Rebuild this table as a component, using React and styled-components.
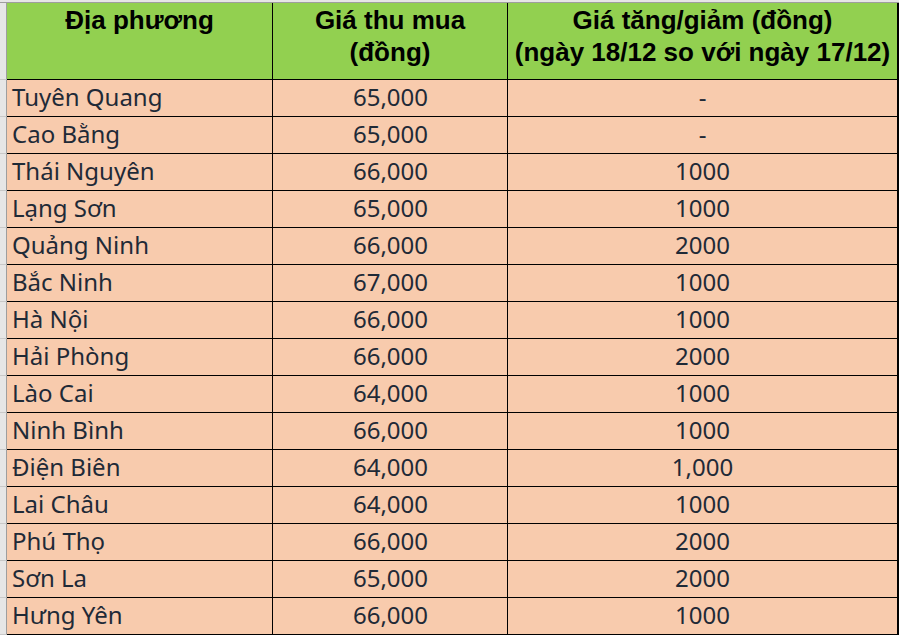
import styled, { createGlobalStyle } from 'styled-components';

const GlobalStyle = createGlobalStyle`
  html, body {
    margin: 0;
    padding: 0;
    background: #ffffff;
  }
  * {
    box-sizing: border-box;
  }
`;

const rows = [
  ['Tuyên Quang', '65,000', '-'],
  ['Cao Bằng', '65,000', '-'],
  ['Thái Nguyên', '66,000', '1000'],
  ['Lạng Sơn', '65,000', '1000'],
  ['Quảng Ninh', '66,000', '2000'],
  ['Bắc Ninh', '67,000', '1000'],
  ['Hà Nội', '66,000', '1000'],
  ['Hải Phòng', '66,000', '2000'],
  ['Lào Cai', '64,000', '1000'],
  ['Ninh Bình', '66,000', '1000'],
  ['Điện Biên', '64,000', '1,000'],
  ['Lai Châu', '64,000', '1000'],
  ['Phú Thọ', '66,000', '2000'],
  ['Sơn La', '65,000', '2000'],
  ['Hưng Yên', '66,000', '1000'],
];

const Sheet = styled.div({
  display: 'grid',
  gridTemplateColumns: '7px 266px 235px 391px',
  gridTemplateRows: `3px 77px repeat(${rows.length}, 37px)`,
  width: 900,
  height: 640,
  background: '#ffffff',
});

const Gutter = styled.div({
  background: '#e6e6e6',
  borderRight: '1px solid #9e9e9e',
  borderBottom: '1px solid #c8c8c8',
});

const TopGutter = styled.div({
  background: '#e6e6e6',
  borderBottom: '1px solid #9e9e9e',
});

const HeadCell = styled.div(({ $last }) => ({
  background: '#92d050',
  borderRight: `${$last ? 2 : 1}px solid #000`,
  borderBottom: '1px solid #000',
  fontFamily: '"Liberation Sans", Arial, sans-serif',
  fontWeight: 700,
  fontSize: 26,
  lineHeight: '32px',
  color: '#000',
  textAlign: 'center',
  paddingTop: 1,
  whiteSpace: 'pre-line',
}));

const Cell = styled.div(({ $align, $last }) => ({
  background: '#f8cbad',
  borderRight: `${$last ? 2 : 1}px solid #000`,
  borderBottom: '1px solid #000',
  fontFamily: '"Noto Sans", "Open Sans", sans-serif',
  fontSize: 24,
  color: '#1f2a37',
  display: 'flex',
  alignItems: 'center',
  justifyContent:
    $align === 'right' ? 'flex-end' : $align === 'center' ? 'center' : 'flex-start',
  paddingLeft: $align === 'left' ? 5 : 0,
  paddingRight: $align === 'right' ? 79 : 0,
  paddingBottom: 3,
}));

const Row = ({ place, price, change }) => (
  <>
    <Gutter />
    <Cell $align="left">{place}</Cell>
    <Cell $align="right">{price}</Cell>
    <Cell $align="center" $last>
      {change}
    </Cell>
  </>
);

const App = () => (
  <>
    <GlobalStyle />
    <Sheet>
      <TopGutter />
      <TopGutter />
      <TopGutter />
      <TopGutter />

      <Gutter />
      <HeadCell>Địa phương</HeadCell>
      <HeadCell>{'Giá thu mua\n(đồng)'}</HeadCell>
      <HeadCell $last>{'Giá tăng/giảm (đồng)\n(ngày 18/12 so với ngày 17/12)'}</HeadCell>

      {rows.map(([place, price, change]) => (
        <Row key={place} place={place} price={price} change={change} />
      ))}
    </Sheet>
  </>
);

export default App;
